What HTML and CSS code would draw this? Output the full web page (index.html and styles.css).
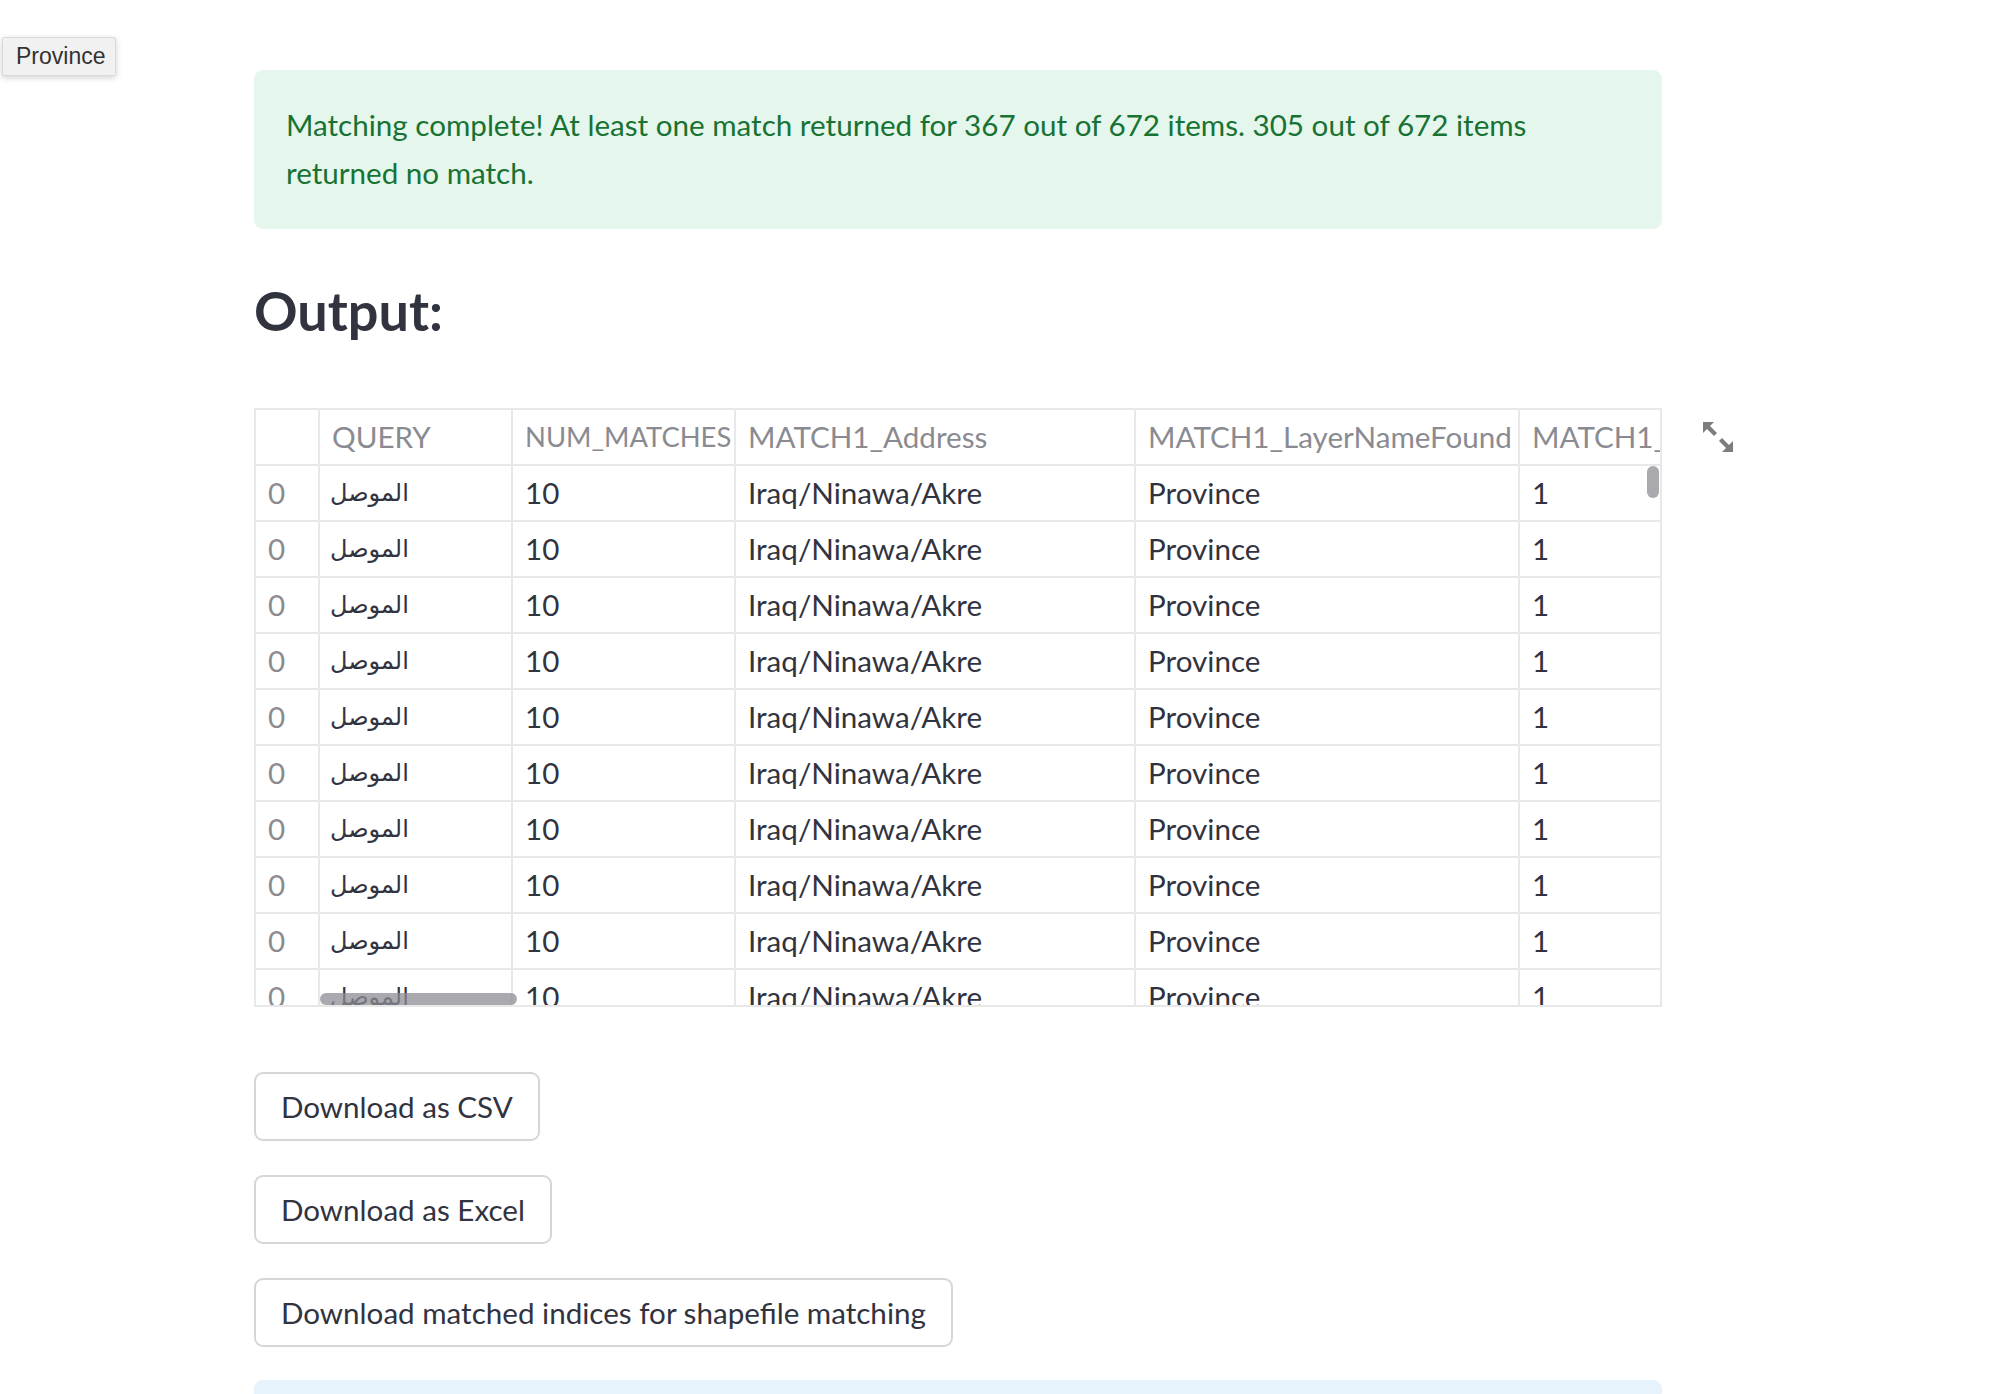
FILE: index.html
```html
<!DOCTYPE html>
<html>
<head>
<meta charset="utf-8">
<link rel="stylesheet" href="styles.css">
</head>
<body>
<div class="tooltip">Province</div>
<main class="main">
  <div class="alert success"><p>Matching complete! At least one match returned for 367 out of 672 items. 305 out of 672 items returned no match.</p></div>
  <h2 class="heading">Output:</h2>
  <div class="df-wrap">
    <div class="df">
      <div class="row head">
        <div class="cell c0"></div>
        <div class="cell c1">QUERY</div>
        <div class="cell c2">NUM_MATCHES</div>
        <div class="cell c3">MATCH1_Address</div>
        <div class="cell c4">MATCH1_LayerNameFound</div>
        <div class="cell c5">MATCH1_Score</div>
      </div>
      <div class="row"><div class="cell c0">0</div><div class="cell c1">الموصل</div><div class="cell c2">10</div><div class="cell c3">Iraq/Ninawa/Akre</div><div class="cell c4">Province</div><div class="cell c5">1</div></div>
      <div class="row"><div class="cell c0">0</div><div class="cell c1">الموصل</div><div class="cell c2">10</div><div class="cell c3">Iraq/Ninawa/Akre</div><div class="cell c4">Province</div><div class="cell c5">1</div></div>
      <div class="row"><div class="cell c0">0</div><div class="cell c1">الموصل</div><div class="cell c2">10</div><div class="cell c3">Iraq/Ninawa/Akre</div><div class="cell c4">Province</div><div class="cell c5">1</div></div>
      <div class="row"><div class="cell c0">0</div><div class="cell c1">الموصل</div><div class="cell c2">10</div><div class="cell c3">Iraq/Ninawa/Akre</div><div class="cell c4">Province</div><div class="cell c5">1</div></div>
      <div class="row"><div class="cell c0">0</div><div class="cell c1">الموصل</div><div class="cell c2">10</div><div class="cell c3">Iraq/Ninawa/Akre</div><div class="cell c4">Province</div><div class="cell c5">1</div></div>
      <div class="row"><div class="cell c0">0</div><div class="cell c1">الموصل</div><div class="cell c2">10</div><div class="cell c3">Iraq/Ninawa/Akre</div><div class="cell c4">Province</div><div class="cell c5">1</div></div>
      <div class="row"><div class="cell c0">0</div><div class="cell c1">الموصل</div><div class="cell c2">10</div><div class="cell c3">Iraq/Ninawa/Akre</div><div class="cell c4">Province</div><div class="cell c5">1</div></div>
      <div class="row"><div class="cell c0">0</div><div class="cell c1">الموصل</div><div class="cell c2">10</div><div class="cell c3">Iraq/Ninawa/Akre</div><div class="cell c4">Province</div><div class="cell c5">1</div></div>
      <div class="row"><div class="cell c0">0</div><div class="cell c1">الموصل</div><div class="cell c2">10</div><div class="cell c3">Iraq/Ninawa/Akre</div><div class="cell c4">Province</div><div class="cell c5">1</div></div>
      <div class="row"><div class="cell c0">0</div><div class="cell c1">الموصل</div><div class="cell c2">10</div><div class="cell c3">Iraq/Ninawa/Akre</div><div class="cell c4">Province</div><div class="cell c5">1</div></div>
      <div class="vscroll"></div>
      <div class="hscroll"></div>
    </div>
    <svg class="expand" width="30" height="30" viewBox="0 0 30 30">
      <polygon points="0,0 11,0 0,11" fill="#7d7d80"/>
      <line x1="3" y1="3" x2="12.5" y2="12.5" stroke="#7d7d80" stroke-width="4.2"/>
      <polygon points="30,30 19,30 30,19" fill="#7d7d80"/>
      <line x1="27" y1="27" x2="17.5" y2="17.5" stroke="#7d7d80" stroke-width="4.2"/>
    </svg>
  </div>
  <div class="btn-row"><button class="btn">Download as CSV</button></div>
  <div class="btn-row"><button class="btn">Download as Excel</button></div>
  <div class="btn-row"><button class="btn">Download matched indices for shapefile matching</button></div>
  <div class="alert info"></div>
</main>
</body>
</html>
```
FILE: styles.css
```css
html, body {
  margin: 0;
  padding: 0;
  background: #ffffff;
}
body {
  font-family: "Lato", "DejaVu Sans", sans-serif;
  color: #31333f;
  width: 1992px;
  height: 1394px;
  overflow: hidden;
}
.tooltip {
  position: absolute;
  left: 2px;
  top: 37px;
  box-sizing: border-box;
  width: 114px;
  height: 39px;
  padding: 0 0 0 13px;
  background: #f1f1f1;
  border: 1px solid #d9d9d9;
  border-radius: 2px;
  box-shadow: 0 2px 6px rgba(0, 0, 0, 0.18);
  font-family: "Liberation Sans", Arial, sans-serif;
  font-size: 23px;
  line-height: 37px;
  color: #333333;
}
.main {
  box-sizing: border-box;
  width: 1408px;
  margin-left: 254px;
  padding-top: 70px;
}
.alert {
  box-sizing: border-box;
  width: 1408px;
  border-radius: 9px;
}
.alert.success {
  background: #e5f7ec;
  padding: 31px 100px 32px 32px;
  color: #177233;
}
.alert p {
  margin: 0;
  font-size: 29.6px;
  line-height: 48px;
}
.heading {
  margin: 47px 0 0 0;
  font-size: 54px;
  line-height: 70px;
  font-weight: 700;
  color: #31333f;
}
.df-wrap {
  position: relative;
  margin-top: 62px;
  width: 1408px;
}
.df {
  position: relative;
  box-sizing: border-box;
  width: 1408px;
  height: 599px;
  border: 2px solid #e8e8e8;
  overflow: hidden;
}
.row {
  display: flex;
  flex-wrap: nowrap;
}
.cell {
  flex: none;
  box-sizing: border-box;
  height: 56px;
  border-right: 2px solid #e8e8e8;
  border-bottom: 2px solid #e8e8e8;
  padding: 0 0 0 12px;
  font-size: 29.6px;
  line-height: 54px;
  white-space: nowrap;
  overflow: hidden;
  color: #31333f;
}
.head .cell {
  color: #8a8b91;
}
.head .cell.c2 {
  font-size: 27.4px;
}
.cell.c0 { width: 64px; color: #8a8b91; }
.cell.c1 { width: 193px; font-family: "DejaVu Sans", sans-serif; font-size: 24px; padding-left: 10px; }
.head .cell.c1 { font-family: "Lato", sans-serif; font-size: 29.6px; padding-left: 12px; }
.cell.c2 { width: 223px; }
.cell.c3 { width: 400px; }
.cell.c4 { width: 384px; }
.cell.c5 { width: 240px; }
.vscroll {
  position: absolute;
  left: 1391px;
  top: 56px;
  width: 12px;
  height: 32px;
  border-radius: 6px;
  background: #a9a9ae;
}
.hscroll {
  position: absolute;
  left: 64px;
  top: 583px;
  width: 197px;
  height: 12px;
  border-radius: 6px;
  background: rgba(140, 140, 148, 0.75);
}
.expand {
  position: absolute;
  left: 1449px;
  top: 14px;
}
.btn-row {
  display: flex;
}
.df-wrap + .btn-row {
  margin-top: 65px;
}
.btn-row + .btn-row {
  margin-top: 34px;
}
.btn {
  box-sizing: border-box;
  height: 69px;
  padding: 0 25px;
  background: #ffffff;
  border: 2px solid #d6d6d9;
  border-radius: 9px;
  font-family: "Lato", sans-serif;
  font-size: 29.6px;
  color: #31333f;
  cursor: pointer;
}
.alert.info {
  margin-top: 33px;
  height: 80px;
  background: #e6f2fc;
}
```
